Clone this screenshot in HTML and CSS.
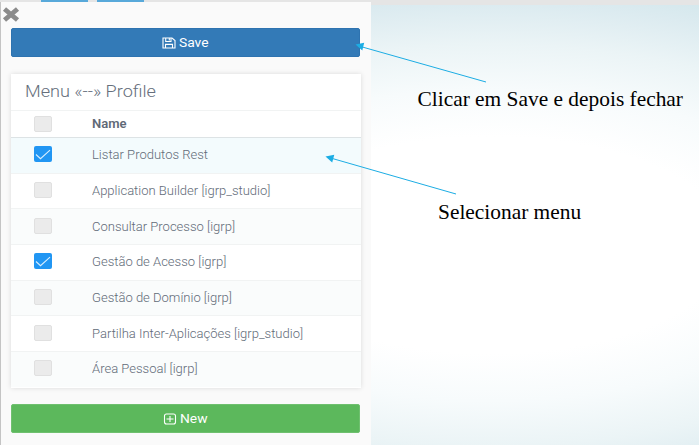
FILE: index.html
```
<!DOCTYPE html>
<html lang="pt">
<head>
<meta charset="utf-8">
<title>Menu Profile</title>
<link rel="stylesheet" href="styles.css">
</head>
<body>
<div class="slide">
  <div class="topbar"><i class="tab"></i><i class="tab"></i></div>
  <main class="panel">
    <svg class="close" viewBox="0 0 20 17"><path d="M3.5 3L16.5 14M16.5 3L3.5 14"/></svg>
    <button class="btn save"><svg class="icon" viewBox="0 0 14 12"><path d="M1 1H10L13 3.6V11H1ZM3.7 1V4.5H9V1M3.5 11V7.4H10.5V11M7.3 1.5V3.5"/></svg><span>Save</span></button>
    <section class="card">
      <h1><span class="wide">Menu «--» Profile</span></h1>
      <div class="row head"><i class="check"></i><span class="wide">Name</span></div>
      <div class="row selected"><i class="check on"><svg viewBox="0 0 18 16"><path d="M2 8.5L6.5 12.7L16 4.2"/></svg></i><span class="wide">Listar Produtos Rest</span></div>
      <div class="row"><i class="check"></i><span class="wide">Application Builder [igrp_studio]</span></div>
      <div class="row odd"><i class="check"></i><span class="wide">Consultar Processo [igrp]</span></div>
      <div class="row"><i class="check on"><svg viewBox="0 0 18 16"><path d="M2 8.5L6.5 12.7L16 4.2"/></svg></i><span class="wide">Gestão de Acesso [igrp]</span></div>
      <div class="row odd"><i class="check"></i><span class="wide">Gestão de Domínio [igrp]</span></div>
      <div class="row"><i class="check"></i><span class="wide">Partilha Inter-Aplicações [igrp_studio]</span></div>
      <div class="row odd"><i class="check"></i><span class="wide">Área Pessoal [igrp]</span></div>
    </section>
    <button class="btn new"><svg class="icon" viewBox="0 0 14 12"><rect x="1.5" y="1" width="11" height="10" rx="2"/><path d="M7 3V9M3.5 6H10.5"/></svg><span>New</span></button>
  </main>
  <svg class="arrows" viewBox="0 0 699 445">
    <path class="line" d="M486 82L363 47.2M456 194L333 158.7"/>
    <path class="tip" d="M355.5 44.5L364.2 42.8L362.3 50.6ZM325.5 156.5L334.3 154.8L332.2 162.4Z"/>
  </svg>
  <p class="note first">Clicar em Save e depois fechar</p>
  <p class="note second">Selecionar menu</p>
</div>
</body>
</html>
```
FILE: styles.css
```
* { box-sizing: border-box; }
body { margin: 0; font-family: Roboto, "Liberation Sans", sans-serif; }
.slide {
  position: relative;
  width: 699px;
  height: 445px;
  overflow: hidden;
  display: flex;
  flex-direction: column;
  background:
    linear-gradient(#e5e5e5, #e5e5e5) 0 0 / 100% 5px no-repeat,
    radial-gradient(ellipse 583px 264px at 490px 245px, #fff 0 41%, #f7fbfc 59%, #ebf4f6 76%, #dcebf0 91%, #d5e8ed 98%);
}
.topbar { height: 2px; flex: none; display: flex; gap: 9px; padding-left: 41px; }
.tab { width: 47px; height: 2px; background: #58a9da; }
.panel {
  width: 371px;
  height: 443px;
  padding: 26px 10px 0 10px;
  background: #fafafa;
  border-left: 1px solid #c4c4c4;
}
.close { position: absolute; left: 1px; top: 6px; width: 20px; height: 17px; }
.close path { stroke: #8b8b8b; stroke-width: 4.8; fill: none; stroke-linecap: butt; }
.btn {
  width: 349px;
  height: 29px;
  padding: 0 4px 0 0;
  display: flex;
  align-items: center;
  justify-content: center;
  gap: 3px;
  border: 0;
  border-radius: 2px;
  color: #fff;
  font: 450 12px/28px Roboto, sans-serif;
}
.btn span { transform: scaleX(1.15); transform-origin: left; }
.save { background: #337ab7; border: 1px solid #2e73b0; }
.new { background: #5cb85c; border: 1px solid #6fc06f; }
.icon { width: 14px; height: 12px; fill: none; stroke: #fff; stroke-width: 1.1; }
.card {
  width: 350px;
  height: 314px;
  margin: 17px 0 16px;
  background: #fff;
  box-shadow: 0 0 5px rgba(0, 0, 0, .13);
}
.wide { display: inline-block; transform: scaleX(1.085); transform-origin: left; white-space: nowrap; }
h1 { height: 36px; margin: 0; padding-left: 14.4px; font: 350 17px/35px Roboto, sans-serif; color: #666f7c; }
h1 .wide { transform: scaleX(1.065); }
.row {
  height: 35.7px;
  display: flex;
  align-items: center;
  padding-left: 23px;
  gap: 40.3px;
  border-top: 1px solid #f1f3f3;
  font-size: 12px;
  font-weight: 350;
  color: #626b78;
}
.row.head { height: 27px; font-weight: 600; color: #5f6976; }
.row.selected { background: #f3fbfd; border-top-color: #dde3e5; }
.row.odd { background: #fafcfc; }
.check {
  width: 18px;
  height: 16px;
  flex: none;
  margin-bottom: 2px;
  border-radius: 2px;
  background: #ebebeb;
  border: 1px solid #e0e0e0;
}
.head .check { margin-bottom: 0; }
.check.on { background: #2196f3; border: 0; }
.check svg { display: block; width: 18px; height: 16px; }
.check path { fill: none; stroke: #d9efff; stroke-width: 1.1; }
.arrows { position: absolute; inset: 0; width: 699px; height: 445px; }
.line { stroke: #1cade4; stroke-width: 1; fill: none; }
.tip { fill: #1cade4; }
.note { position: absolute; margin: 0; font: 21.4px/24px "Liberation Serif", serif; color: #000; white-space: nowrap; }
.first { left: 417.5px; top: 87px; }
.second { left: 438px; top: 200px; }
```
